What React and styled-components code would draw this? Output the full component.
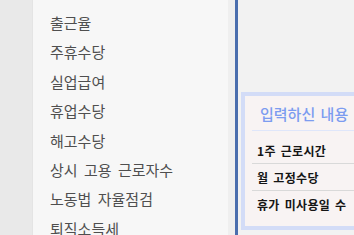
import React from "react";
import styled, { createGlobalStyle } from "styled-components";

const Global = createGlobalStyle`
  html, body { margin: 0; padding: 0; }
  body {
    width: 354px;
    height: 235px;
    overflow: hidden;
    background: #efefef;
    font-family: "Noto Sans CJK KR", "Noto Sans", sans-serif;
  }
`;

const Layout = styled.div`
  display: flex;
  width: 354px;
  height: 235px;
  background: #efefef;
  overflow: hidden;
`;

const LeftStrip = styled.div`
  flex: 0 0 32px;
  background: #e9e9e9;
  border-right: 1px solid #e4e4e4;
`;

const Sidebar = styled.nav`
  flex: 0 0 195px;
  background: #f7f7f7;
  padding: 8px 0 0 17px;
  box-sizing: border-box;
`;

const MenuList = styled.ul`
  list-style: none;
  margin: 0;
  padding: 0;
`;

const MenuItem = styled.li`
  height: 29.4px;
  line-height: 29.4px;
  font-size: 15px;
  word-spacing: 3px;
  color: #4f4f4f;
  white-space: nowrap;
`;

const Main = styled.main`
  flex: 0 0 auto;
  width: 400px;
  margin-left: 7px;
  border-left: 3px solid #4a6eae;
  background: #f2f2f2;
  padding: 92px 0 0 3px;
  box-sizing: border-box;
`;

const Card = styled.section`
  width: 240px;
  border: 4px solid #d3dcf7;
  background: #f8f3f3;
  padding: 0 7px 8px;
`;

const CardHeader = styled.h2`
  margin: 0;
  height: 34px;
  display: flex;
  align-items: center;
  padding-left: 8px;
  font-size: 15px;
  font-weight: 500;
  word-spacing: 2px;
  color: #7c9cf0;
  border-bottom: 1px solid #dfe6fa;
  white-space: nowrap;
`;

const Rows = styled.div`
  padding-top: 6px;
`;

const Row = styled.div`
  height: 27px;
  display: flex;
  align-items: center;
  padding-left: 5px;
  font-size: 12px;
  letter-spacing: 0.3px;
  word-spacing: 2px;
  font-weight: 700;
  color: #151515;
  border-bottom: ${(p) => (p.$last ? "none" : "1px solid #d9d9d9")};
  box-sizing: border-box;
  white-space: nowrap;
`;

const menu = [
  "출근율",
  "주휴수당",
  "실업급여",
  "휴업수당",
  "해고수당",
  "상시 고용 근로자수",
  "노동법 자율점검",
  "퇴직소득세",
];

const rows = ["1주 근로시간", "월 고정수당", "휴가 미사용일 수"];

export default function App() {
  return (
    <>
      <Global />
      <Layout>
        <LeftStrip />
        <Sidebar>
          <MenuList>
            {menu.map((m) => (
              <MenuItem key={m}>{m}</MenuItem>
            ))}
          </MenuList>
        </Sidebar>
        <Main>
          <Card>
            <CardHeader>입력하신 내용</CardHeader>
            <Rows>
              {rows.map((r, i) => (
                <Row key={r} $last={i === rows.length - 1}>
                  {r}
                </Row>
              ))}
            </Rows>
          </Card>
        </Main>
      </Layout>
    </>
  );
}
